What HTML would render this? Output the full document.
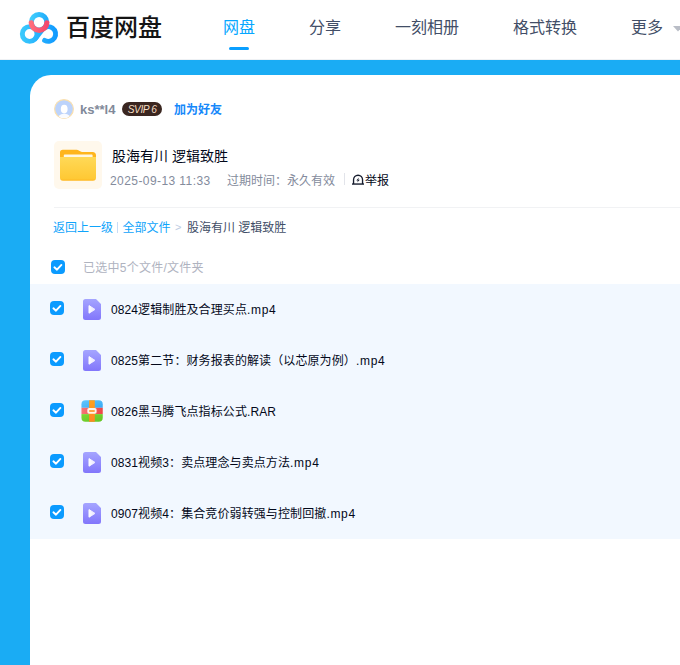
<!DOCTYPE html>
<html lang="zh-CN">
<head>
<meta charset="utf-8">
<title>百度网盘</title>
<style>
*{box-sizing:border-box;margin:0;padding:0}
html,body{width:680px;height:665px;overflow:hidden;background:#1aacf4;font-family:"Liberation Sans","Noto Sans CJK SC",sans-serif;}
body{position:relative}
.hdr{position:absolute;left:0;top:0;width:680px;height:60px;background:#fff;border-bottom:1px solid #eef1f4}
.brand{position:absolute;left:66px;top:10px;font-size:24px;font-weight:500;color:#141414;line-height:36px;white-space:nowrap}
.nav span{position:absolute;top:17px;font-size:16px;color:#424e67;line-height:22px;white-space:nowrap}
.nav .act{color:#06a7ff}
.navbar{position:absolute;left:229px;top:47px;width:20px;height:3px;border-radius:1.5px;background:#0a9fff}
.card{position:absolute;left:30px;top:75px;width:660px;height:600px;background:#fff;border-radius:21px 0 0 0}
.abs{position:absolute;white-space:nowrap}
.rows{position:absolute;left:30px;top:284px;width:650px;height:255px;background:#f2f8ff}
.cb{position:absolute;width:14px;height:14px}
.vid{position:absolute;left:83px;width:18px;height:21px}
.fname{position:absolute;left:111px;font-size:12px;color:#03081a;line-height:18px;white-space:nowrap;letter-spacing:0.1px}
.e{letter-spacing:0.7px}
svg{display:block;overflow:visible}
</style>
</head>
<body>
<svg width="0" height="0" style="position:absolute">
  <defs>
    <linearGradient id="gl" gradientUnits="userSpaceOnUse" x1="20" y1="0" x2="58" y2="0"><stop offset="0" stop-color="#3ccbfc"/><stop offset="1" stop-color="#0f98ff"/></linearGradient>
    <linearGradient id="gt" x1="0" y1="0" x2="1" y2="0"><stop offset="0" stop-color="#3fcdfd"/><stop offset="1" stop-color="#22adfa"/></linearGradient>
    <linearGradient id="gr" x1="0" y1="0" x2="1" y2="0"><stop offset="0" stop-color="#ff6d7c"/><stop offset="1" stop-color="#f4486c"/></linearGradient>
    <linearGradient id="gv" x1="0" y1="0" x2="0" y2="1"><stop offset="0" stop-color="#a5a5ff"/><stop offset="1" stop-color="#8276fb"/></linearGradient>
    <linearGradient id="gf" x1="0" y1="0" x2="0" y2="1"><stop offset="0" stop-color="#ffd957"/><stop offset="0.9" stop-color="#ffc935"/><stop offset="1" stop-color="#ffb722"/></linearGradient>
    <linearGradient id="gp" gradientUnits="userSpaceOnUse" x1="5" y1="0" x2="13" y2="0"><stop offset="0" stop-color="#ffffff"/><stop offset="1" stop-color="#e6e2ff"/></linearGradient>
    <symbol id="cbs" viewBox="0 0 14 14"><rect width="14" height="14" rx="4" fill="#0b9bff"/><path d="M3.4 7.3 L6 9.7 L10.4 4.9" fill="none" stroke="#fff" stroke-width="1.9" stroke-linecap="round" stroke-linejoin="round"/></symbol>
    <symbol id="vids" viewBox="0 0 18 21"><path d="M2.5 0 H13 L18 5 V18.5 A2.5 2.5 0 0 1 15.5 21 H2.5 A2.5 2.5 0 0 1 0 18.5 V2.5 A2.5 2.5 0 0 1 2.5 0 Z" fill="url(#gv)"/><path d="M6 6.6 L12 10.4 L6 14.2 Z" fill="url(#gp)" stroke="url(#gp)" stroke-width="1" stroke-linejoin="round"/></symbol>
  </defs>
</svg>

<div class="hdr">
  <svg style="position:absolute;left:0;top:0" width="70" height="60" viewBox="0 0 70 60">
    <g fill="none" stroke-linecap="round">
      <circle cx="39.06" cy="22.2" r="7.7" stroke="url(#gt)" stroke-width="4.9"/>
      <circle cx="29.65" cy="34.0" r="7.35" stroke="url(#gl)" stroke-width="4.9"/>
      <path d="M35.46 38.50 L42.44 29.50 A7.35 7.35 0 1 1 44.58 40.37" stroke="url(#gl)" stroke-width="4.9"/>
      <path d="M31.27 22.9 A7.8 7.8 0 0 0 46.85 22.9" stroke="url(#gr)" stroke-width="5.2"/>
    </g>
  </svg>
  <div class="brand">百度网盘</div>
  <div class="nav">
    <span class="act" style="left:223px">网盘</span>
    <span style="left:309px">分享</span>
    <span style="left:395px">一刻相册</span>
    <span style="left:513px">格式转换</span>
    <span style="left:631px">更多</span>
  </div>
  <div class="navbar"></div>
  <svg style="position:absolute;left:673px;top:26px" width="10" height="6" viewBox="0 0 10 6"><path d="M0 0 H10 L5 5.5 Z" fill="#b9bdc6"/></svg>
</div>
<div class="card"></div>

<!-- user -->
<svg style="position:absolute;left:54px;top:99px" width="20" height="20" viewBox="0 0 20 20">
  <defs><clipPath id="avc"><circle cx="10" cy="10" r="9.3"/></clipPath></defs>
  <circle cx="10" cy="10" r="9.4" fill="#bcd3fb" stroke="#fbe0ae" stroke-width="1.2"/>
  <g clip-path="url(#avc)" fill="#fff"><ellipse cx="10.2" cy="10" rx="3.4" ry="4.3"/><path d="M4.2 20 L5.2 16.6 Q6.6 14.9 10.2 14.6 Q13.8 14.9 15.2 16.6 L16.2 20 Z" opacity=".9"/></g>
</svg>
<div class="abs" style="left:80px;top:101px;font-size:13px;font-weight:700;color:#818999;line-height:18px">ks**l4</div>
<div class="abs" style="left:122px;top:102px;width:40px;height:14px;border-radius:7px;background:#3a2620;color:#f6dfc4;font-size:10.2px;font-weight:400;font-style:italic;line-height:15.8px;text-align:center;letter-spacing:-0.45px;padding-left:0.8px">SVIP<span style="margin-left:2.2px;letter-spacing:0">6</span></div>
<div class="abs" style="left:174px;top:101px;font-size:12px;font-weight:700;color:#1588fa;line-height:18px">加为好友</div>

<!-- folder -->
<div class="abs" style="left:54px;top:141px;width:48px;height:48px;border-radius:5px;background:#fff8ec"></div>
<svg style="position:absolute;left:60px;top:149px" width="36" height="32" viewBox="0 0 36 32">
  <path d="M0 3.6 A2.8 2.8 0 0 1 2.8 0.8 H16.5 Q18 0.8 19.2 1.8 Q20.6 2.9 22 2.9 H32.5 A3.5 3.5 0 0 1 36 6.4 V14 H0 Z" fill="#ffb51c"/>
  <rect x="3.8" y="5.6" width="28.8" height="6" rx="0.8" fill="#fff7e2"/>
  <path d="M0 7.9 H36 V28.8 A3 3 0 0 1 33 31.8 H3 A3 3 0 0 1 0 28.8 Z" fill="url(#gf)"/>
</svg>
<div class="abs" style="left:112px;top:145px;font-size:14px;color:#03081a;line-height:22px">股海有川 逻辑致胜</div>
<div class="abs" style="left:110px;top:172px;font-size:12px;color:#848b9c;line-height:18px;letter-spacing:0.42px">2025-09-13 11:33</div>
<div class="abs" style="left:227px;top:172px;font-size:12px;color:#848b9c;line-height:18px">过期时间：永久有效</div>
<div class="abs" style="left:344px;top:173px;width:1px;height:12px;background:#e2e4ea"></div>
<svg style="position:absolute;left:352px;top:174px" width="12" height="11" viewBox="0 0 12 11">
  <path d="M1.55 10 V5.75 A4.5 4.5 0 0 1 10.55 5.75 V10" fill="none" stroke="#161c2e" stroke-width="1.35"/>
  <path d="M0 10.05 H12" stroke="#161c2e" stroke-width="1.4"/>
  <path d="M6.9 3.6 L4.3 6.5 H5.9 L5.2 8.6 L7.8 5.7 H6.2 Z" fill="#161c2e"/>
</svg>
<div class="abs" style="left:365px;top:172px;font-size:12px;color:#03081a;line-height:18px">举报</div>

<div class="abs" style="left:54px;top:207px;width:626px;height:1px;background:#f1f2f4"></div>

<!-- breadcrumb -->
<div class="abs" style="left:53px;top:219px;font-size:12px;color:#0fa4fb;line-height:18px">返回上一级</div>
<div class="abs" style="left:117px;top:222px;width:1px;height:11px;background:#c8dcf5"></div>
<div class="abs" style="left:122.5px;top:219px;font-size:12px;color:#0fa4fb;line-height:18px">全部文件</div>
<div class="abs" style="left:175px;top:217.6px;font-size:11px;color:#bccbe2;line-height:18px">&gt;</div>
<div class="abs" style="left:187px;top:219px;font-size:12px;color:#424e67;line-height:18px">股海有川 逻辑致胜</div>

<svg class="cb" style="left:51px;top:260px"><use href="#cbs"/></svg>
<div class="abs" style="left:83px;top:259px;font-size:12px;color:#afb3bf;line-height:18px;letter-spacing:0.25px">已选中5个文件/文件夹</div>

<div class="rows"></div>

<svg class="cb" style="left:50px;top:301px"><use href="#cbs"/></svg>
<svg class="vid" style="top:299px"><use href="#vids"/></svg>
<div class="fname" style="top:301px">0824逻辑制胜及合理买点<span class="e">.mp4</span></div>

<svg class="cb" style="left:50px;top:352px"><use href="#cbs"/></svg>
<svg class="vid" style="top:350px"><use href="#vids"/></svg>
<div class="fname" style="top:352px">0825第二节：财务报表的解读（以芯原为例）<span class="e">.mp4</span></div>

<svg class="cb" style="left:50px;top:403px"><use href="#cbs"/></svg>
<svg style="position:absolute;left:81px;top:400px" width="22" height="22" viewBox="0 0 22 22">
  <defs><clipPath id="rc"><rect x="0.45" y="0.35" width="21.3" height="21.3" rx="4"/></clipPath>
  <linearGradient id="rb" x1="0" y1="0" x2="1" y2="1"><stop offset="0" stop-color="#66c6fb"/><stop offset="1" stop-color="#35aaf5"/></linearGradient>
  <linearGradient id="rr" x1="0" y1="0" x2="1" y2="0"><stop offset="0" stop-color="#f67676"/><stop offset="1" stop-color="#ed4545"/></linearGradient>
  <linearGradient id="rg" x1="0" y1="0" x2="1" y2="1"><stop offset="0" stop-color="#7fd835"/><stop offset="1" stop-color="#62c424"/></linearGradient>
  <linearGradient id="ro" x1="0" y1="0" x2="0" y2="1"><stop offset="0" stop-color="#ffa21f"/><stop offset="1" stop-color="#ff8622"/></linearGradient></defs>
  <g clip-path="url(#rc)">
    <rect x="0" y="0" width="22" height="7.8" fill="url(#rb)"/>
    <rect x="0" y="7.8" width="22" height="6.3" fill="url(#rr)"/>
    <rect x="0" y="14.1" width="22" height="8" fill="url(#rg)"/>
    <rect x="8.1" y="0" width="5.7" height="22" fill="url(#ro)"/>
  </g>
  <rect x="6.3" y="8.1" width="9.3" height="5.7" rx="1.7" fill="#fff6ea"/>
  <rect x="8.1" y="10.2" width="5.7" height="1.5" rx="0.4" fill="#ff8a10"/>
</svg>
<div class="fname" style="top:403px">0826黑马腾飞点指标公式.RAR</div>

<svg class="cb" style="left:50px;top:454px"><use href="#cbs"/></svg>
<svg class="vid" style="top:452px"><use href="#vids"/></svg>
<div class="fname" style="top:454px">0831视频3：卖点理念与卖点方法<span class="e">.mp4</span></div>

<svg class="cb" style="left:50px;top:505px"><use href="#cbs"/></svg>
<svg class="vid" style="top:503px"><use href="#vids"/></svg>
<div class="fname" style="top:505px">0907视频4：集合竞价弱转强与控制回撤<span class="e">.mp4</span></div>
</body>
</html>
